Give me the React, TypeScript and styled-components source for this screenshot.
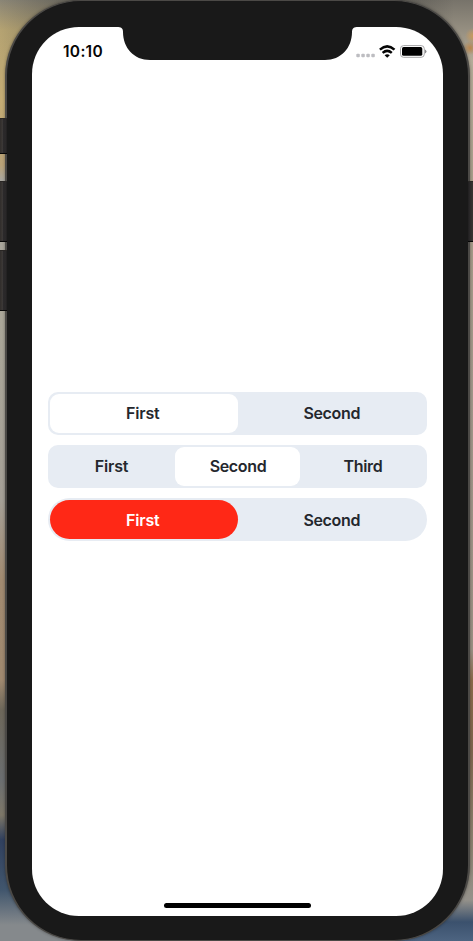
import React, { useState } from "react";
import styled, { createGlobalStyle } from "styled-components";

const GlobalStyle = createGlobalStyle`
  html, body { margin: 0; padding: 0; overflow: hidden; }
  *, *::before, *::after { box-sizing: border-box; }
`;

const Desktop = styled.main`
  position: relative;
  width: 473px;
  height: 941px;
  padding: 0 3px 0 5px;
  overflow: hidden;
  font-family: Inter, "Liberation Sans", sans-serif;
  background:
    radial-gradient(circle at 473px 36px, #c99a5c 0, transparent 8px),
    radial-gradient(circle at 470px 48px, #b9854c 0, transparent 7px),
    linear-gradient(90deg, rgba(60, 60, 58, 0) 0, rgba(60, 60, 58, 0.55) 18%, rgba(60, 60, 58, 0.55) 80%, rgba(60, 60, 58, 0) 96%) 0 0 / 100% 60px no-repeat,
    linear-gradient(180deg, #8a8576 0, #b5a372 30px, #c4ac74 100px, #b9a277 165px, #a9a69e 180px,
      #aaa698 320px, #a5a097 500px, #a18a70 580px, #a0896f 680px, #6d675a 710px, #6b6e70 780px, #7d7768 815px, #30405e 840px, #41566d 890px, #85898c 925px) 0 0 / 50% 100% no-repeat,
    linear-gradient(180deg, #77736a 0, #b4ab98 60px, #a69b88 200px, #a2978a 400px, #9b9083 650px,
      #8c6b4b 680px, #80664e 750px, #8d8472 850px, #94918a 900px, #3b516d 922px, #4d6481 941px) 100% 0 / 50% 100% no-repeat;
`;

const HardwareButton = styled.span<{ $side: "left" | "right"; $top: number; $height: number }>`
  position: absolute;
  z-index: 1;
  ${({ $side }) => $side}: 0;
  top: ${({ $top }) => $top}px;
  width: ${({ $side }) => ($side === "left" ? 7 : 5)}px;
  height: ${({ $height }) => $height}px;
  background: ${({ $side }) =>
    $side === "left"
      ? "linear-gradient(90deg, #302d2b 0, #383431 1.5px, #4a4643 2px, #2b292a 3px, #292728 6px, #1d1c1c 7px)"
      : "linear-gradient(90deg, #1f1e1f 0, #2b292a 2px, #393532 5px)"};
  border-top: 1px solid #292624;
  border-bottom: 1px solid #050505;
`;

const PhoneBody = styled.div`
  position: relative;
  width: 465px;
  height: 941px;
  padding: 26px 25px 24px;
  background: #191919;
  border: 2px solid #4b4946;
  border-width: 1px 2px;
  border-radius: 76px;
  box-shadow: 0 0 3px rgba(20, 20, 20, 0.45);
`;

const Screen = styled.div`
  position: relative;
  display: flex;
  flex-direction: column;
  width: 411px;
  height: 889px;
  border-radius: 47px;
  background: #fff;
  overflow: hidden;
`;

const Notch = styled.svg`
  position: absolute;
  left: 85px;
  top: 0;
  width: 241px;
  height: 33px;
`;

const StatusBar = styled.header`
  display: flex;
  justify-content: space-between;
  height: 48px;
  padding: 15px 16px 0 31px;
`;

const Clock = styled.time`
  font-size: 15.5px;
  font-weight: 600;
  line-height: 20px;
  letter-spacing: 0.3px;
  color: #050505;
`;

const StatusIcons = styled.svg`
  width: 72px;
  height: 18px;
`;

const Content = styled.section`
  display: flex;
  flex: 1;
  flex-direction: column;
  gap: 10.4px;
  padding: 316.6px 16px 0;
`;

const SegmentedControl = styled.div<{ $round: boolean }>`
  display: grid;
  grid-auto-flow: column;
  grid-auto-columns: minmax(0, 1fr);
  flex: none;
  height: 43px;
  padding: 2px;
  border-radius: ${({ $round }) => ($round ? 22 : 10)}px;
  background: #e7ecf3;
`;

const Segment = styled.button<{ $active: boolean; $accent: boolean }>`
  padding: 0 0 0 1px;
  border: 0;
  border-radius: ${({ $accent }) => ($accent ? 20 : 9)}px;
  background: ${({ $active, $accent }) => ($active ? ($accent ? "#ff2816" : "#fff") : "transparent")};
  color: ${({ $active, $accent }) => ($active && $accent ? "#fff" : "#24272d")};
  font-family: inherit;
  font-size: 16px;
  font-weight: 600;
  line-height: 20px;
  letter-spacing: -0.35px;

  &:first-child {
    padding: 0 2px 0 0;
    letter-spacing: -0.15px;
  }
`;

const HomeIndicator = styled.div`
  flex: none;
  align-self: center;
  width: 147px;
  height: 5px;
  margin-bottom: 8px;
  border-radius: 3px;
  background: #000;
`;

const controls = [
  { items: ["First", "Second"], initial: 0 },
  { items: ["First", "Second", "Third"], initial: 1 },
  { items: ["First", "Second"], initial: 0, accent: true },
];

function Segments({ items, initial, accent = false }: { items: string[]; initial: number; accent?: boolean }) {
  const [selected, setSelected] = useState(initial);
  return (
    <SegmentedControl $round={accent}>
      {items.map((item, index) => (
        <Segment key={item} $active={selected === index} $accent={accent} onClick={() => setSelected(index)}>
          {item}
        </Segment>
      ))}
    </SegmentedControl>
  );
}

export default function App() {
  return (
    <Desktop>
      <GlobalStyle />
      <HardwareButton $side="left" $top={118} $height={36} />
      <HardwareButton $side="left" $top={181} $height={61} />
      <HardwareButton $side="left" $top={250} $height={61} />
      <HardwareButton $side="right" $top={181} $height={61} />
      <PhoneBody>
        <Screen>
          <Notch viewBox="0 0 241 33" aria-hidden="true">
            <path fill="#191919" d="M0 0C4 0 6 1 6 5C6 21 17 33 33 33H208C224 33 235 21 235 5C235 1 237 0 241 0Z" />
          </Notch>
          <StatusBar>
            <Clock>10:10</Clock>
            <StatusIcons viewBox="355 42 72 18" aria-hidden="true">
              <g fill="#bdbdc1">
                <rect x="356.3" y="53.7" width="3.5" height="3.5" rx="1" />
                <rect x="361.3" y="53.7" width="3.5" height="3.5" rx="1" />
                <rect x="366.3" y="53.7" width="3.5" height="3.5" rx="1" />
                <rect x="371.3" y="53.7" width="3.5" height="3.5" rx="1" />
              </g>
              <g fill="none" stroke="#050505" strokeWidth="2.5">
                <path d="M379.9 49.6Q387.2 43.1 394.5 49.6" />
                <path d="M382.6 52.9Q387.2 48.9 391.8 52.9" />
              </g>
              <path d="M384.6 55.2Q387.2 53.2 389.8 55.2L387.2 57.8Z" fill="#050505" />
              <rect x="400.5" y="45.6" width="23.8" height="11.7" rx="3.1" fill="#fff" stroke="#a4a4a6" />
              <rect x="402" y="47.1" width="20.3" height="8.7" rx="1.6" fill="#000" />
              <path d="M425 49.4Q428 51.5 425 53.6Z" fill="#87878a" />
            </StatusIcons>
          </StatusBar>
          <Content>
            {controls.map((control, index) => (
              <Segments key={index} {...control} />
            ))}
          </Content>
          <HomeIndicator />
        </Screen>
      </PhoneBody>
    </Desktop>
  );
}
